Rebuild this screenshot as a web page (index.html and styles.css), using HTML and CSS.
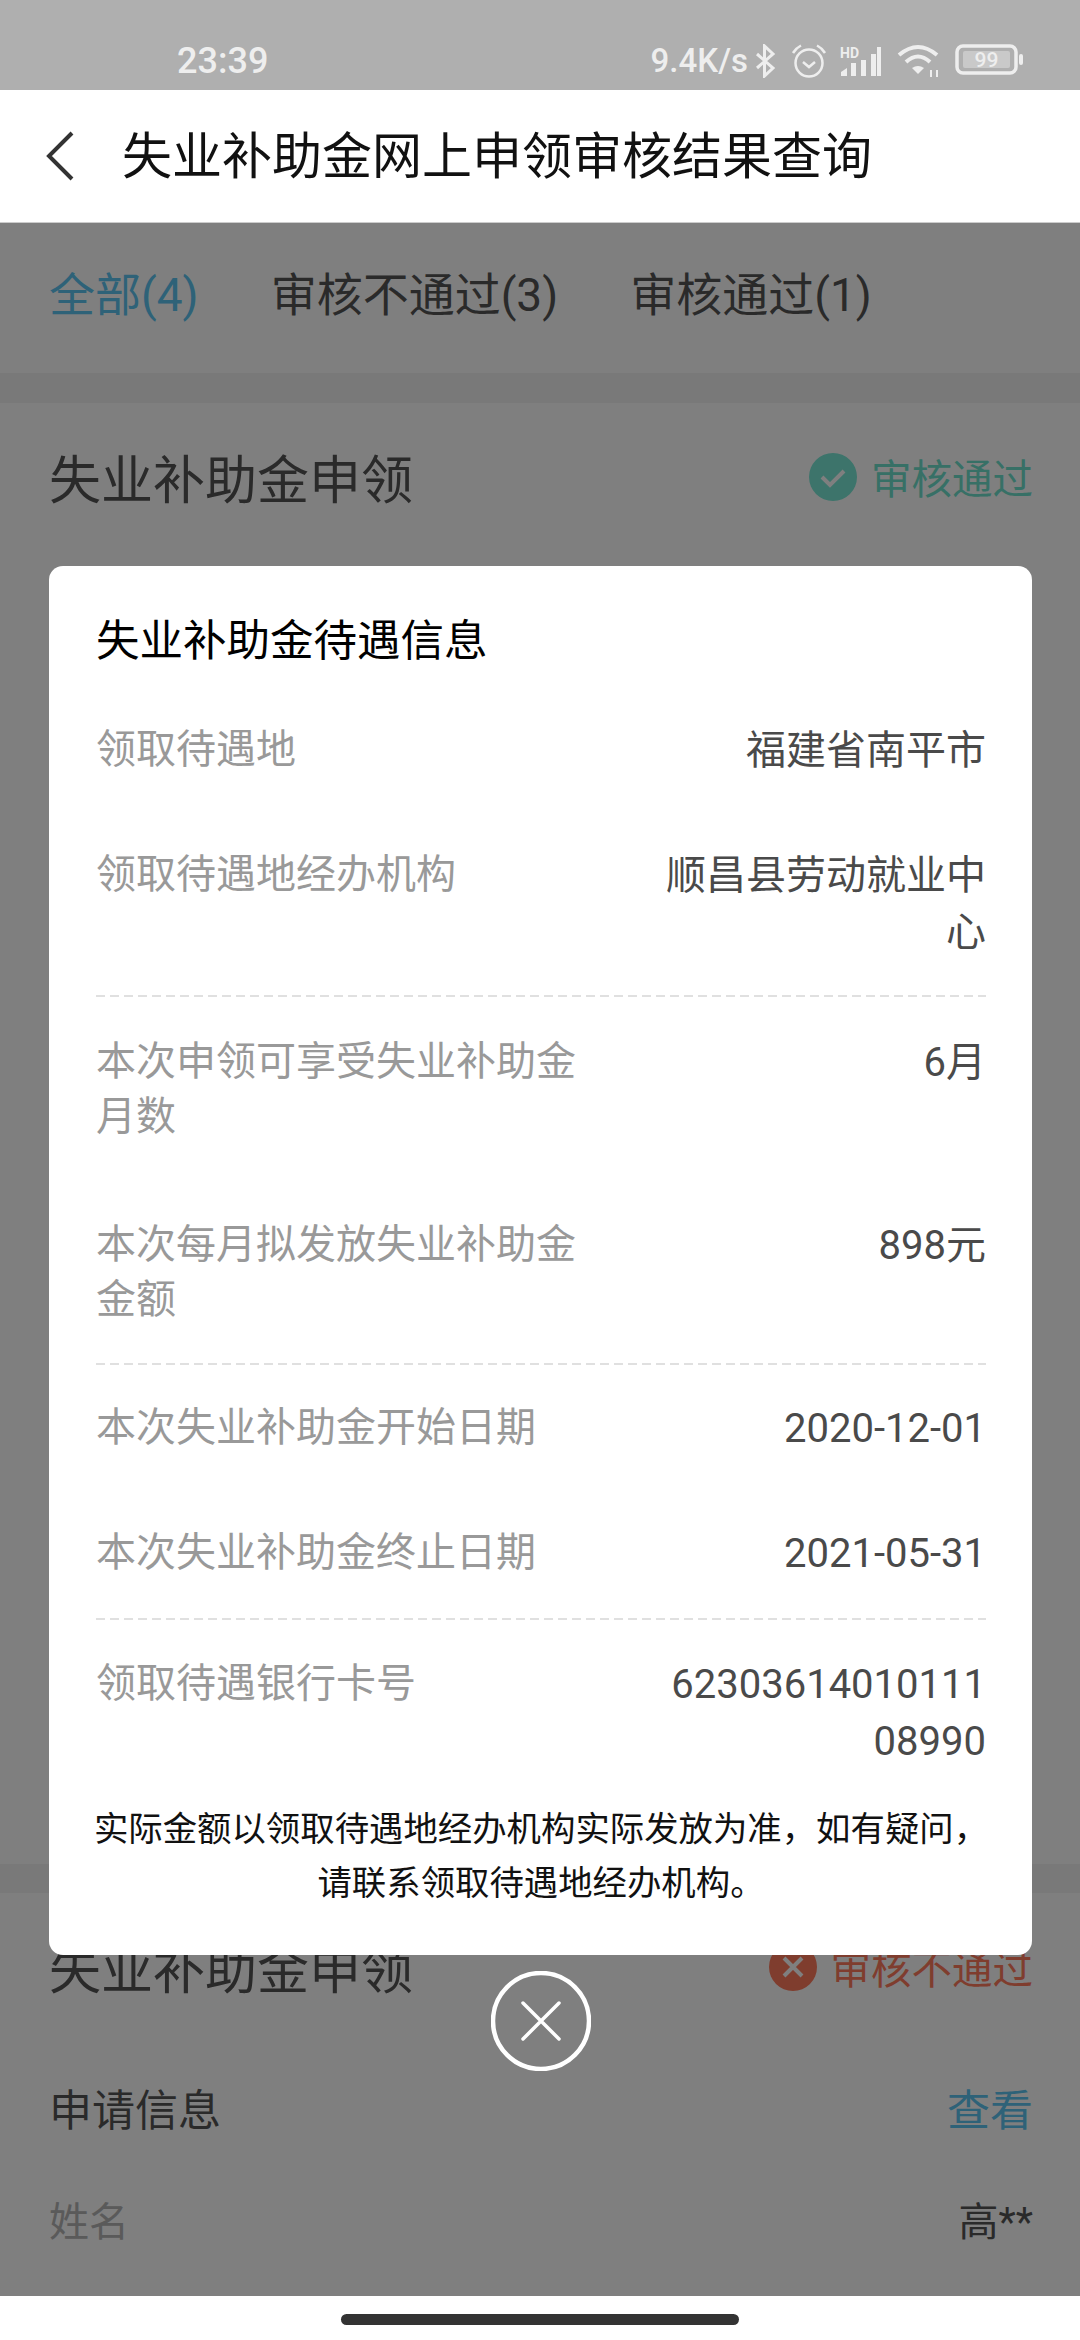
FILE: index.html
```html
<!DOCTYPE html>
<html lang="zh-CN">
<head>
  <meta charset="UTF-8" />
  <meta name="viewport" content="width=device-width, initial-scale=1.0"/>
  <title>失业补助金网上申领审核结果查询</title>
  <link rel="stylesheet" href="styles.css">
</head>
<body>

  <div class="status-bar">
    <span class="status-time">23:39</span>
    <div class="status-icons">
      <span class="status-speed">9.4K/s</span>
      <svg class="icon-bt" width="21" height="34" viewBox="0 0 21 34" fill="none" stroke="#eee" stroke-width="3">
        <path d="M2 10 L18 24 L9.500 32 V2 L18 10 L2 24"/>
      </svg>
      <svg class="icon-alarm" width="36" height="34" viewBox="0 0 36 34" fill="none" stroke="#eee" stroke-width="2.500">
        <circle cx="18" cy="19" r="13.500"/>
        <path d="M12 18 L18 23 L24 18"/>
        <path d="M2 9 Q5 4 10 1.500"/>
        <path d="M26 1.500 Q31 4 34 9"/>
      </svg>
      <svg class="icon-signal" width="42" height="32" viewBox="0 0 42 32" fill="#eee">
        <text x="0" y="12" font-family="Roboto, sans-serif" font-size="14" font-weight="700">HD</text>
        <path d="M1 30 V26 L7 22 V30 Z"/>
        <rect x="11" y="17" width="5" height="13"/>
        <rect x="21" y="14" width="5" height="16"/>
        <rect x="31" y="8" width="5" height="22"/>
        <rect x="37" y="1" width="4" height="29"/>
      </svg>
      <svg class="icon-wifi" width="44" height="34" viewBox="0 0 44 34" fill="none" stroke="#eee" stroke-width="4">
        <path d="M2 11 Q21 -5 40 11"/>
        <path d="M9 18 Q21 7 33 18"/>
        <path d="M15 24 Q21 20 27 24 L21 30 Z" fill="#eee" stroke="none"/>
        <path d="M34 26 V33 M40 33 V26" stroke-width="2"/>
      </svg>
      <svg class="icon-battery" width="68" height="32" viewBox="0 0 68 32">
        <rect x="2" y="2" width="59" height="27" rx="6" fill="none" stroke="#eee" stroke-width="3.500"/>
        <rect x="8" y="7" width="47" height="17" rx="2" fill="#c9c9c9"/>
        <text x="31.500" y="23" text-anchor="middle" font-family="Roboto, sans-serif" font-size="21" font-weight="500" fill="#eee">99</text>
        <rect x="64" y="10" width="4" height="11" rx="2" fill="#eee"/>
      </svg>
    </div>
  </div>

  <header class="nav-bar">
    <svg class="back-icon" width="30" height="50" viewBox="0 0 30 50" fill="none" stroke="#333" stroke-width="4">
      <path d="M27 2 L4 25 L27 48"/>
    </svg>
    <h1 class="nav-title">失业补助金网上申领审核结果查询</h1>
  </header>

  <main class="content">
    <div class="tabs">
      <span class="tab active">全部(4)</span>
      <span class="tab">审核不通过(3)</span>
      <span class="tab">审核通过(1)</span>
    </div>

    <section class="card card-first">
      <div class="card-head">
        <h2 class="card-title">失业补助金申领</h2>
        <span class="result result-pass">
          <svg width="48" height="48" viewBox="0 0 48 48">
            <circle cx="24" cy="24" r="24" fill="#7ae8d6"/>
            <path d="M13 24 L21 32 L35 18" fill="none" stroke="#fff" stroke-width="4"/>
          </svg>
          审核通过
        </span>
      </div>
    </section>

    <section class="card card-second">
      <div class="card-head">
        <h2 class="card-title">失业补助金申领</h2>
        <span class="result result-fail">
          <svg width="48" height="48" viewBox="0 0 48 48">
            <circle cx="24" cy="24" r="24" fill="#ff7a5c"/>
            <path d="M15 15 L33 33 M33 15 L15 33" fill="none" stroke="#fff" stroke-width="4"/>
          </svg>
          审核不通过
        </span>
      </div>
      <div class="info-head">
        <span>申请信息</span>
        <span class="info-link">查看</span>
      </div>
      <div class="info-row">
        <span class="info-label">姓名</span>
        <span class="info-value">高**</span>
      </div>
    </section>

    <div class="mask"></div>

    <div class="dialog">
      <div class="dialog-box">
        <h3 class="dialog-title">失业补助金待遇信息</h3>

        <div class="group group-place">
          <div class="row">
            <span class="row-label">领取待遇地</span>
            <span class="row-value">福建省南平市</span>
          </div>
          <div class="row">
            <span class="row-label">领取待遇地经办机构</span>
            <span class="row-value">顺昌县劳动就业中心</span>
          </div>
        </div>
        <div class="dash"></div>

        <div class="group group-money">
          <div class="row">
            <span class="row-label">本次申领可享受失业补助金月数</span>
            <span class="row-value">6月</span>
          </div>
          <div class="row">
            <span class="row-label">本次每月拟发放失业补助金金额</span>
            <span class="row-value">898元</span>
          </div>
        </div>
        <div class="dash"></div>

        <div class="group group-date">
          <div class="row">
            <span class="row-label">本次失业补助金开始日期</span>
            <span class="row-value">2020-12-01</span>
          </div>
          <div class="row">
            <span class="row-label">本次失业补助金终止日期</span>
            <span class="row-value">2021-05-31</span>
          </div>
        </div>
        <div class="dash"></div>

        <div class="group group-bank">
          <div class="row">
            <span class="row-label">领取待遇银行卡号</span>
            <span class="row-value">6230361401011108990</span>
          </div>
        </div>

        <p class="dialog-note">实际金额以领取待遇地经办机构实际发放为准，如有疑问，请联系领取待遇地经办机构。</p>
      </div>

      <button class="close-btn" aria-label="关闭">
        <svg width="100" height="100" viewBox="0 0 100 100" fill="none" stroke="#fff">
          <circle cx="50" cy="50" r="48" stroke-width="4.500"/>
          <path d="M32 32 L68 68 M68 32 L32 68" stroke-width="3.500" stroke-linecap="round"/>
        </svg>
      </button>
    </div>
  </main>

  <div class="home-area">
    <div class="home-bar"></div>
  </div>

</body>
</html>
```

FILE: styles.css
```css
* {
  box-sizing: border-box;
}

html, body {
  margin: 0;
  padding: 0;
}

body {
  width: 1080px;
  height: 2340px;
  overflow: hidden;
  display: flex;
  flex-direction: column;
  background-color: #fff;
  font-family: "Roboto", "Noto Sans CJK SC", sans-serif;
}

/* status bar */
.status-bar {
  height: 90px;
  flex-shrink: 0;
  display: flex;
  align-items: flex-end;
  justify-content: space-between;
  padding: 0 57px 12px 177px;
  background-color: #afafaf;
  color: #eee;
}

.status-time {
  font-size: 36px;
  line-height: 34px;
  font-weight: 500;
}

.status-icons {
  display: flex;
  align-items: flex-end;
}

.status-speed {
  font-size: 33px;
  line-height: 34px;
  font-weight: 500;
  margin-right: 7px;
}

.icon-bt {
  margin-right: 15px;
}

.icon-alarm {
  margin-right: 13px;
}

.icon-signal {
  margin-right: 15px;
}

.icon-wifi {
  margin-right: 14px;
}

.icon-battery {
  margin-bottom: 2px;
}

/* nav */
.nav-bar {
  height: 133px;
  flex-shrink: 0;
  display: flex;
  align-items: center;
  padding-left: 45px;
  background-color: #fff;
  border-bottom: 1px solid #ccc;
}

.back-icon {
  margin-right: 47px;
}

.nav-title {
  margin: 0 0 8px;
  font-size: 50px;
  font-weight: 400;
  color: #111;
}

/* page under the dialog */
.content {
  position: relative;
  flex: 1;
  display: flex;
  flex-direction: column;
  background-color: #f2f2f2;
}

.tabs {
  height: 150px;
  flex-shrink: 0;
  display: flex;
  align-items: center;
  gap: 72px;
  padding: 0 49px 14px;
  background-color: #fff;
  font-size: 46px;
  color: #555;
}

.tab.active {
  color: #5cc4f0;
}

.card {
  background-color: #fff;
  padding: 0 47px 0 49px;
}

.card-first {
  height: 1461px;
  margin-top: 30px;
  flex-shrink: 0;
  padding-top: 36px;
}

.card-second {
  flex: 1;
  margin-top: 29px;
  padding-top: 36px;
}

.card-head {
  display: flex;
  align-items: center;
  justify-content: space-between;
}

.card-title {
  margin: 0;
  font-size: 52px;
  font-weight: 400;
  color: #555;
}

.result {
  display: flex;
  align-items: center;
  gap: 14px;
  font-size: 40.500px;
}

.result-pass {
  color: #6ee0cc;
}

.result-fail {
  color: #ff7a5c;
}

.info-head,
.info-row {
  display: flex;
  justify-content: space-between;
  align-items: center;
}

.info-head {
  margin-top: 72px;
  font-size: 43px;
  color: #555;
}

.info-link {
  color: #5cc4f0;
}

.info-row {
  margin-top: 52px;
  font-size: 40px;
}

.info-label {
  color: #b4b4b4;
}

.info-value {
  color: #555;
}

.mask {
  position: absolute;
  top: 0;
  left: 0;
  right: 0;
  bottom: 0;
  background-color: rgba(0, 0, 0, 0.5);
}

/* dialog */
.dialog {
  position: absolute;
  top: 343px;
  left: 49px;
  width: 983px;
  display: flex;
  flex-direction: column;
  align-items: center;
}

.dialog-box {
  width: 100%;
  height: 1389px;
  padding: 47px 46px 0 47px;
  background-color: #fff;
  border-radius: 14px;
}

.dialog-title {
  margin: 0;
  font-size: 43.500px;
  line-height: 58px;
  font-weight: 400;
  color: #000;
}

.group {
  display: flex;
  flex-direction: column;
}

.group-place {
  margin-top: 51px;
  gap: 68px;
  padding-bottom: 34px;
}

.group-money {
  padding-top: 37px;
  gap: 73px;
  padding-bottom: 36px;
}

.group-date {
  padding-top: 35px;
  gap: 68px;
  padding-bottom: 36px;
}

.group-bank {
  padding-top: 36px;
}

.row {
  display: grid;
  grid-template-columns: 1fr 336px;
  gap: 40px;
  font-size: 40px;
}

.row-label {
  line-height: 55px;
  color: #999;
}

.row-value {
  line-height: 57px;
  text-align: right;
  word-break: break-all;
  color: #4a4a4a;
}

.dash {
  height: 2px;
  background-image: repeating-linear-gradient(to right, #e0e0e0 0, #e0e0e0 9px, transparent 9px, transparent 14px);
}

.dialog-note {
  margin: 32px -8px 0;
  font-size: 34.400px;
  line-height: 54px;
  text-align: center;
  color: #111;
}

.close-btn {
  margin-top: 16px;
  padding: 0;
  width: 100px;
  height: 100px;
  background: none;
  border: none;
}

.close-btn svg {
  display: block;
}

/* home indicator */
.home-area {
  height: 44px;
  flex-shrink: 0;
  display: flex;
  justify-content: center;
  padding-top: 18px;
  background-color: #fff;
}

.home-bar {
  width: 398px;
  height: 11px;
  border-radius: 6px;
  background-color: #333;
}
```
